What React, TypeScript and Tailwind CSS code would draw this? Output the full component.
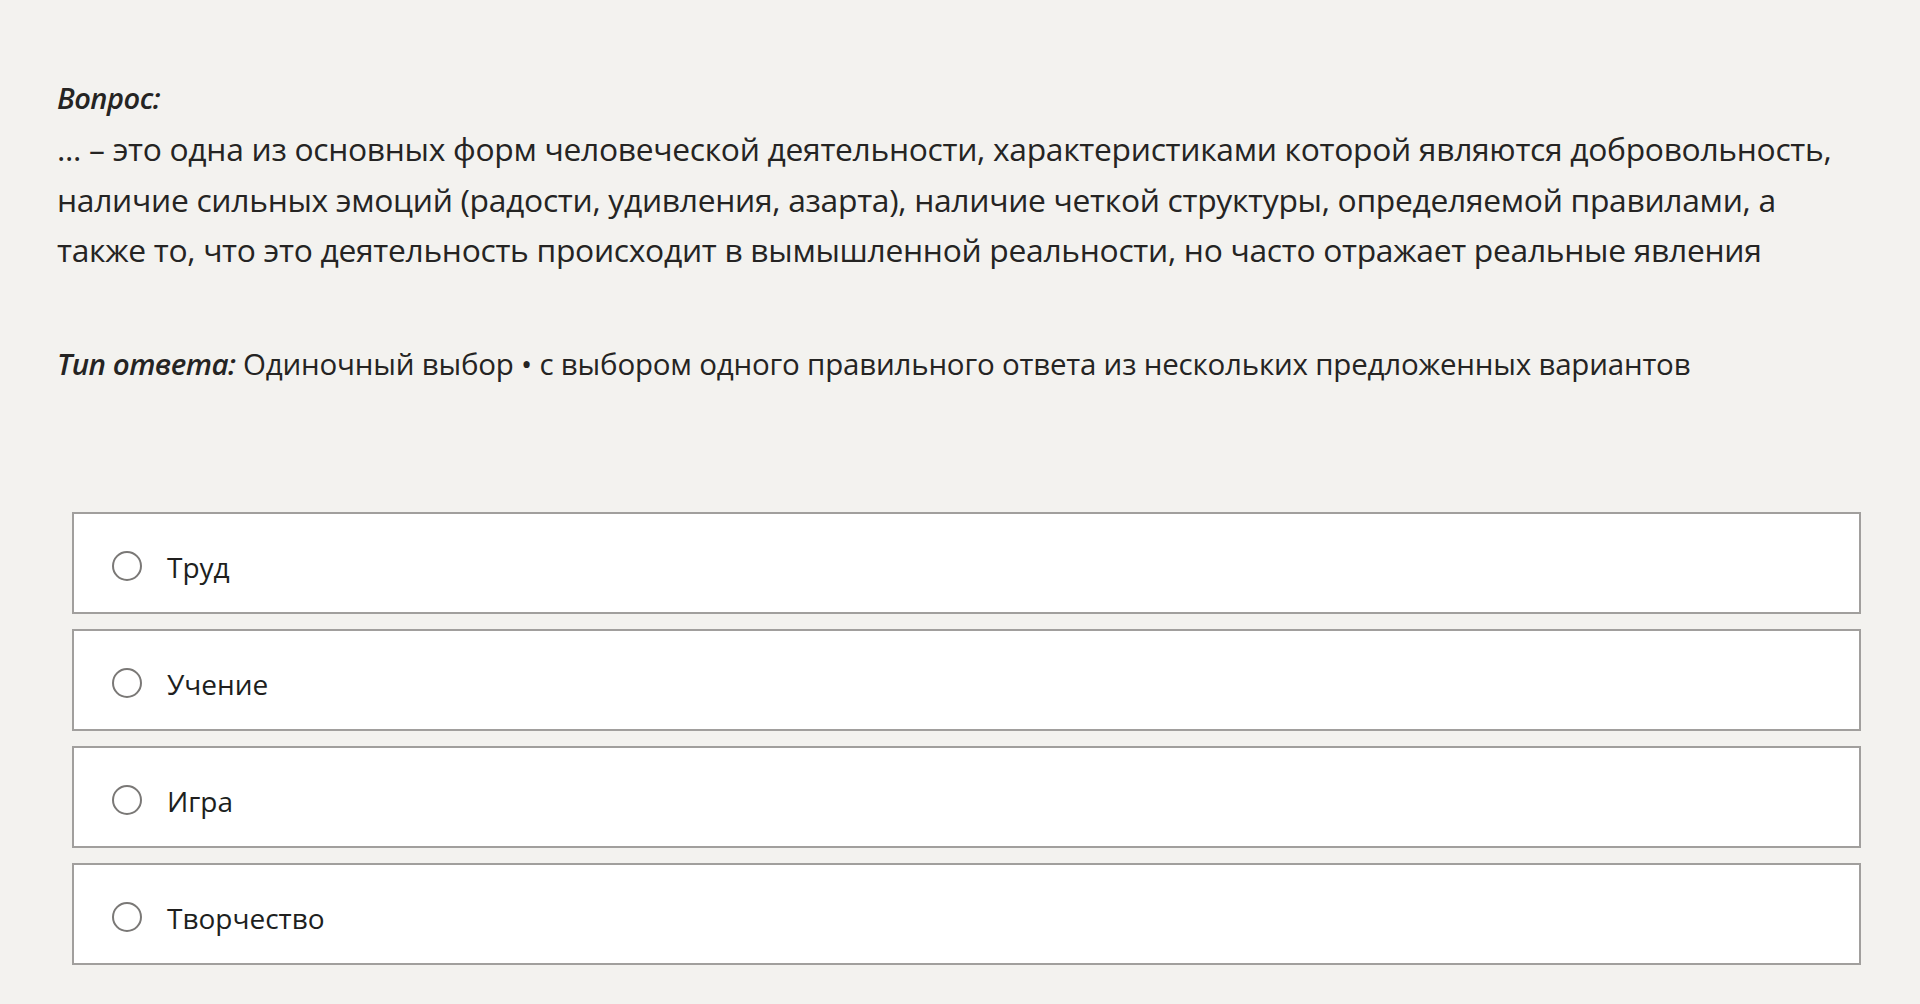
import React from "react";

const options = ["Труд", "Учение", "Игра", "Творчество"];

export default function App() {
  return (
    <div
      className="w-full min-h-[1004px] bg-[#f3f2ef] text-[#252423]"
      style={{ fontFamily: '"Open Sans", "Noto Sans", sans-serif' }}
    >
      <div className="pl-[57px] pr-[20px] pt-[76px]">
        <div className="text-[29px] leading-[44px] font-semibold italic tracking-[-0.5px]">Вопрос:</div>
        <p className="mt-[4px] text-[31.8px] leading-[50.5px] tracking-[-0.3px] whitespace-nowrap">
          ... – это одна из основных форм человеческой деятельности, характеристиками которой являются добровольность,
          <br />
          наличие сильных эмоций (радости, удивления, азарта), наличие четкой структуры, определяемой правилами, а
          <br />
          также то, что это деятельность происходит в вымышленной реальности, но часто отражает реальные явления
        </p>
        <p className="mt-[66px] text-[29.5px] leading-[44px] tracking-[-0.2px]">
          <span className="font-semibold italic tracking-[-0.5px]">Тип ответа:</span> Одиночный выбор • с выбором одного
          правильного ответа из нескольких предложенных вариантов
        </p>
      </div>
      <div className="mt-[126px] ml-[72px] w-[1789px] flex flex-col gap-[15px]">
        {options.map((o) => (
          <label
            key={o}
            className="h-[102px] bg-white border-2 border-[#a19f9d] flex items-center pl-[38px] pt-[7px]"
          >
            <span className="w-[30px] h-[30px] rounded-full border-2 border-[#7a7876] bg-white shrink-0" />
            <span className="ml-[25px] text-[28px] leading-none text-[#201f1e] mt-[1px]">{o}</span>
          </label>
        ))}
      </div>
    </div>
  );
}
